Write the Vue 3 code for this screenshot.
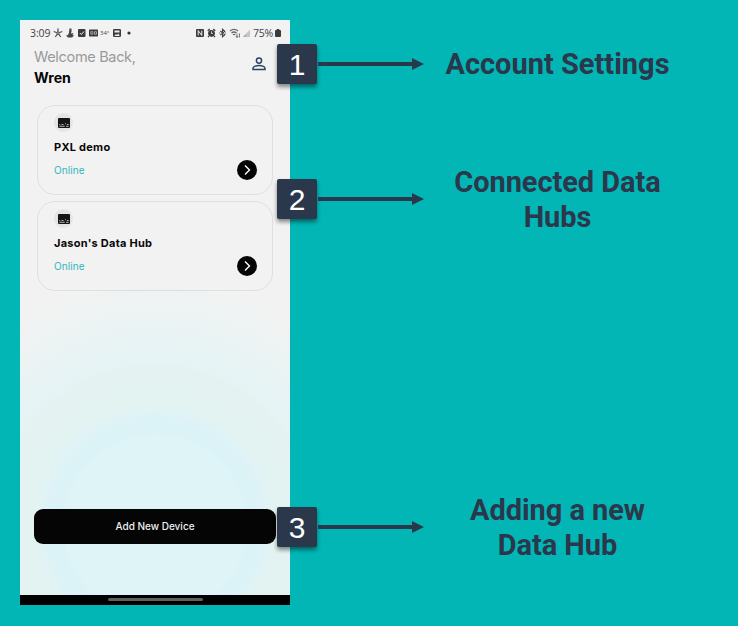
<script setup>
const devices = ["PXL demo", "Jason's Data Hub"]
const callouts = [
  { n: 1, pos: 'first', lines: ['Account Settings'] },
  { n: 2, pos: 'second', lines: ['Connected Data', 'Hubs'] },
  { n: 3, pos: 'third', lines: ['Adding a new', 'Data Hub'] }
]
</script>

<template>
  <main class="stage">
    <section class="phone">
      <header class="status">
        <span class="clock">3:09</span>
        <svg class="notif" viewBox="52 26 80 14" fill="none">
          <g stroke="#555" stroke-width="1.3"><path d="M58 28.500v4M53.700 31.500l4.300 1.500 4.300-1.500M58 33l-2.700 4M58 33l2.700 4" /><circle cx="58" cy="33" r="1.100" fill="#eee" stroke-width=".8" /></g>
          <path d="M69.500 28.500h2v3.500l-1 1.500 3-.5-1 2 1.500.5-2 2h-4L66 35.500l2-.5 1-2.500z" fill="#444" />
          <rect x="78" y="29" width="7.500" height="8" rx="1" fill="#3b3b3b" /><path d="m79.800 33 1.500 1.500 2.700-3" stroke="#eee" />
          <rect x="89" y="29.500" width="9" height="7" rx=".7" fill="#3b3b3b" /><path d="M90.800 31.700h2v2.500h-2zM94.500 31.700h2v2.500h-2z" stroke="#ccc" stroke-width=".7" />
          <rect x="113" y="29" width="8" height="8" rx="1.300" fill="#3b3b3b" /><path d="M114.500 30.500h5v2h-5zM114.300 36l1.700-2 1 1 1.300-1.500 1.500 2.500z" fill="#eee" />
          <circle cx="129" cy="33" r="1.600" fill="#333" />
        </svg>
        <span class="temp">34°</span>
        <svg class="radio" viewBox="194 26 58 14" fill="none">
          <rect x="196" y="29" width="8" height="8" rx="1" fill="#3b3b3b" /><path d="M198.200 35.500v-5l3.600 5v-5" stroke="#eee" />
          <circle cx="211.500" cy="33.300" r="3.400" fill="#3b3b3b" /><path d="m207.700 30.800 2-1.800M215.300 30.800l-2-1.800M209 36l-1 1.200M214 36l1 1.200" stroke="#3b3b3b" stroke-width="1.200" /><path d="M211.500 31.300v2.200h1.500" stroke="#eee" stroke-width=".8" />
          <path d="m220.300 31 4.500 3.700-2.300 2v-7.400l2.300 2-4.500 3.700M219.300 33h.8M225 33h.8" stroke="#444" stroke-width="1.100" />
          <path d="M230 31c2.500-2 5.500-2 8 0M231.500 33c1.500-1.200 3.500-1.200 5 0M233 34.800q1.200-.8 2.300 0" stroke="#666" stroke-width="1.300" /><path d="M237 33.500v4M235.800 36l1.200 1.500 1.200-1.500M239.500 37.500v-4" stroke="#555" stroke-width=".8" />
          <path d="M243 37h7v-7.500z" fill="#c5c5c5" /><path d="M243 37h3v-3z" fill="#aaa" />
        </svg>
        <span class="percent">75%</span>
        <svg class="battery" viewBox="0 0 6 8"><path d="M1.700 0h2.600v1H5q1 0 1 1v5q0 1-1 1H1Q0 8 0 7V2q0-1 1-1h.7z" fill="#3b3b3b" /></svg>
      </header>
      <div class="greeting">
        <div><p class="welcome">Welcome Back,</p><p class="name">Wren</p></div>
        <svg class="person" viewBox="0 0 14 14" fill="none" stroke="#2a4365" stroke-width="1.500"><circle cx="7" cy="3.600" r="2.600" /><path d="M1 12.500v-1.300C1 9.500 4.500 8.400 7 8.400s6 1.100 6 2.800v1.300z" /></svg>
      </div>
      <div class="cards">
        <article v-for="d in devices" :key="d" class="card">
          <span class="hub"><svg viewBox="0 0 12 10"><rect width="12" height="10" rx="1" fill="#151515" /><path d="M1.300 6.500h1M3.500 6.500h2M7 5.800h1M9 6.500h1.700M1.300 8.300h5.400M8 8.300h2.700" stroke="#d8d8d8" stroke-width=".8" /></svg></span>
          <h2>{{ d }}</h2>
          <p class="online">Online</p>
          <svg class="go" viewBox="0 0 20 20"><circle cx="10" cy="10" r="10" fill="#050505" /><path d="m8 5.500 4.500 4.500L8 14.500" fill="none" stroke="#fff" stroke-width="1.400" /></svg>
        </article>
      </div>
      <button class="add">Add New Device</button>
      <footer class="nav"><i></i></footer>
    </section>
    <section v-for="c in callouts" :key="c.n" class="callout" :class="c.pos">
      <b class="badge">{{ c.n }}</b>
      <svg class="arrow" viewBox="0 0 107 12"><path d="M1 4h94V0l12 6-12 6V8H1z" fill="#2b374b" /></svg>
      <h1><span v-for="l in c.lines" :key="l">{{ l }}</span></h1>
    </section>
  </main>
</template>

<style>
body { margin: 0; background: #02b6b6; }
</style>
<style scoped>
* { box-sizing: border-box; }
p, h1, h2 { margin: 0; white-space: nowrap; }
.stage { position: relative; width: 738px; height: 626px; padding: 20px; background: #02b6b6; overflow: hidden; font-family: Inter, sans-serif; }
.phone { width: 270px; height: 585px; display: flex; flex-direction: column; background: radial-gradient(circle at 135px 506px, #dff4f7 0 90px, #dbf2f6 94px 102px, #dff3f6 112px, #e3f3f2 122px, #e4f3f2 158px, #e6f4f5 172px, #e9f3f4 190px, #eef3f3 220px, #f2f2f2 248px); }
.status { height: 26px; padding: 0 9px 0 10px; display: flex; align-items: center; position: relative; color: #444; font: 10px/14px "Open Sans", sans-serif; }
.clock { width: 22px; font-size: 10.500px; letter-spacing: -.1px; }
.notif { width: 80px; height: 14px; }
.temp { position: absolute; left: 80px; top: 6px; font-size: 6px; }
.radio { width: 58px; height: 14px; margin-left: 62px; }
.percent { width: 21px; margin-left: 1px; font-size: 10.500px; letter-spacing: -.2px; }
.battery { width: 6px; height: 8px; margin-left: 1px; flex: none; }
.greeting { height: 59px; padding: 0 24px 0 14px; display: flex; justify-content: space-between; }
.welcome { color: #999; font-size: 14.500px; line-height: 21px; letter-spacing: -.32px; }
.name { color: #050505; font-size: 14.200px; line-height: 21px; font-weight: 700; }
.person { width: 14px; height: 14px; margin-top: 11px; }
.cards { display: flex; flex-direction: column; gap: 6px; padding: 0 17px; }
.card { position: relative; height: 90px; padding: 7px 16px; border: 1px solid #dce0e0; border-radius: 18px; }
.hub { display: flex; align-items: center; justify-content: center; width: 19px; height: 19px; border-radius: 50%; background: #e4e4e4; }
.hub svg { width: 12px; height: 10px; }
.card h2 { margin-top: 7px; color: #080808; font-size: 11px; line-height: 17px; font-weight: 700; letter-spacing: .26px; }
.online { margin-top: 7px; color: #2eb7b9; font-size: 10px; line-height: 14px; letter-spacing: .08px; }
.go { position: absolute; right: 15.500px; bottom: 14px; width: 20px; height: 20px; }
.add { width: 242px; height: 35px; margin: 218px 14px 0; padding: 0 0 2px; border: 0; border-radius: 9px; background: #050505; color: #eee; font: 500 10px Inter, sans-serif; flex: none; }
.nav { height: 10px; margin-top: auto; padding-bottom: 1px; background: #000; display: flex; align-items: center; justify-content: center; }
.nav i { width: 95px; height: 3px; border-radius: 2px; background: #606060; }
.callout { position: absolute; left: 277px; display: flex; align-items: center; height: 70px; }
.first { top: 29px; }
.second { top: 164px; }
.third { top: 492px; }
.badge { display: flex; align-items: center; justify-content: center; width: 40px; height: 40px; padding-top: 2px; border-radius: 2px; background: #2b374b; color: #fff; font: 400 30px/40px "Liberation Sans", sans-serif; box-shadow: 0 3px 4px rgba(0,0,0,.45); }
.arrow { width: 107px; height: 12px; }
h1 { width: 267px; text-align: center; color: #2b374b; font: 700 29px/35px Roboto, sans-serif; }
.second h1, .third h1 { padding-top: 2px; letter-spacing: -.06px; }
h1 span { display: block; }
</style>
